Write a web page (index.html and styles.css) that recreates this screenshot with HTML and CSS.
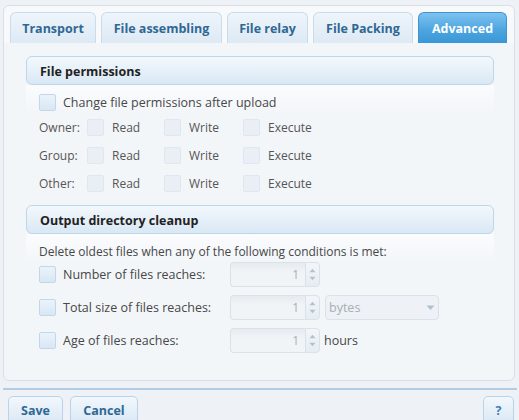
FILE: index.html
```html
<!DOCTYPE html>
<html>
<head>
<meta charset="utf-8">
<link rel="stylesheet" href="styles.css">
</head>
<body>
<div class="dialog">
  <div class="tabs">
    <div class="tab t1">Transport</div>
    <div class="tab t2">File assembling</div>
    <div class="tab t3">File relay</div>
    <div class="tab t4">File Packing</div>
    <div class="tab t5 active">Advanced</div>
  </div>
  <div class="panel">
    <div class="section">
      <div class="sec-head">File permissions</div>
      <div class="sec-body">
        <div class="row first"><span class="cb"></span><span class="lbl">Change file permissions after upload</span></div>
        <div class="row perm"><span class="who">Owner:</span><span class="cb dis"></span><span class="p">Read</span><span class="cb dis"></span><span class="p">Write</span><span class="cb dis"></span><span class="p">Execute</span></div>
        <div class="row perm"><span class="who">Group:</span><span class="cb dis"></span><span class="p">Read</span><span class="cb dis"></span><span class="p">Write</span><span class="cb dis"></span><span class="p">Execute</span></div>
        <div class="row perm"><span class="who">Other:</span><span class="cb dis"></span><span class="p">Read</span><span class="cb dis"></span><span class="p">Write</span><span class="cb dis"></span><span class="p">Execute</span></div>
      </div>
    </div>
    <div class="section second">
      <div class="sec-head">Output directory cleanup</div>
      <div class="sec-body">
        <div class="row note">Delete oldest files when any of the following conditions is met:</div>
        <div class="row cond"><span class="cb"></span><span class="clbl">Number of files reaches:</span><span class="spin"><span class="val">1</span><span class="arrows"><svg width="15" height="23" viewBox="0 0 15 23"><path d="M4 9 L7.5 5 L11 9 Z" fill="#b3c1ce"/><path d="M4 14 L7.5 18 L11 14 Z" fill="#b3c1ce"/></svg></span></span></div>
        <div class="row cond"><span class="cb"></span><span class="clbl">Total size of files reaches:</span><span class="spin"><span class="val">1</span><span class="arrows"><svg width="15" height="23" viewBox="0 0 15 23"><path d="M4 9 L7.5 5 L11 9 Z" fill="#b3c1ce"/><path d="M4 14 L7.5 18 L11 14 Z" fill="#b3c1ce"/></svg></span></span><span class="select"><span class="sval">bytes</span><span class="sarrow"><svg width="9" height="6" viewBox="0 0 9 6"><path d="M0.5 0.5 L8.5 0.5 L4.5 5 Z" fill="#b3c1ce"/></svg></span></span></div>
        <div class="row cond"><span class="cb"></span><span class="clbl">Age of files reaches:</span><span class="spin"><span class="val">1</span><span class="arrows"><svg width="15" height="23" viewBox="0 0 15 23"><path d="M4 9 L7.5 5 L11 9 Z" fill="#b3c1ce"/><path d="M4 14 L7.5 18 L11 14 Z" fill="#b3c1ce"/></svg></span></span><span class="unit">hours</span></div>
      </div>
    </div>
  </div>
</div>
<div class="sep"></div>
<div class="footer">
  <button class="btn save">Save</button>
  <button class="btn cancel">Cancel</button>
  <span class="spacer"></span>
  <button class="btn help">?</button>
</div>
</body>
</html>
```

FILE: styles.css
```css
html, body {
  margin: 0;
  padding: 0;
}
body {
  background: #eef2f6;
  font-family: "Open Sans", "Noto Sans", sans-serif;
  font-size: 12px;
  color: #474747;
  width: 519px;
  height: 420px;
  overflow: hidden;
}
.dialog {
  margin: 5px 4px 0 3px;
  border: 1px solid #d7dfe7;
  border-radius: 6px;
  background: #f3f6f9;
}
.tabs {
  display: flex;
  gap: 5px;
  padding: 6px 0 0 6px;
  background: #f7f9fb;
  border-radius: 6px 6px 0 0;
}
.tab {
  height: 31px;
  box-sizing: border-box;
  border: 1px solid #c9dcec;
  border-bottom: none;
  border-radius: 6px 6px 0 0;
  background: linear-gradient(#eef5fb, #dde9f4);
  color: #2f6894;
  font-weight: 700;
  font-size: 12.5px;
  display: flex;
  align-items: center;
  justify-content: center;
  padding-top: 1px;
}
.t1 { width: 86px; }
.t2 { width: 121px; }
.t3 { width: 81px; }
.t4 { width: 100px; }
.t5 { width: 89px; }
.tab.active {
  background: linear-gradient(#7dc2ef, #4ea6e0 55%, #3a96d6);
  border-color: #3f93cf;
  color: #fff;
}
.panel {
  padding: 13px 20px 27px 22px;
  background: #f3f6f9;
  border-radius: 0 0 6px 6px;
}
.sec-head {
  height: 29px;
  box-sizing: border-box;
  border: 1px solid #bcd6ea;
  border-radius: 6px;
  background: linear-gradient(#f3f8fc, #d9e8f5);
  padding: 2px 0 0 13px;
  display: flex;
  align-items: center;
  font-weight: 700;
  font-size: 12.5px;
  color: #222;
}
.sec-body {
  padding-left: 13px;
  background: linear-gradient(#fafcfe, #f3f6f9 28px);
}
.row {
  display: flex;
  align-items: center;
}
.row.first {
  height: 28px;
  box-sizing: border-box;
  padding-top: 6px;
}
.row.perm {
  height: 28px;
}
.section.second {
  margin-top: 8px;
}
.row.note {
  height: 28px;
  box-sizing: border-box;
  padding-top: 7px;
}
.row.cond {
  height: 25px;
  margin-bottom: 8px;
}
.row.cond:last-child {
  margin-bottom: 0;
}
.cb {
  width: 17px;
  height: 17px;
  box-sizing: border-box;
  border: 1px solid #c3d7e9;
  border-radius: 2px;
  background: linear-gradient(#eaf3fb, #d8e7f4);
  flex: none;
}
.cb.dis {
  border-color: #dfe7ef;
  background: #e9eff5;
}
.lbl {
  margin-left: 7px;
  font-size: 12.5px;
}
.who {
  width: 48px;
  color: #555;
}
.p {
  margin-left: 8px;
  color: #555;
}
.perm span:nth-child(3) { width: 52px; }
.perm span:nth-child(5) { width: 54px; }
.clbl {
  margin-left: 7px;
  width: 167px;
  font-size: 12.5px;
}
.spin {
  display: flex;
  height: 25px;
  flex: none;
}
.val {
  width: 75px;
  box-sizing: border-box;
  border: 1px solid #d9e1e9;
  border-right: none;
  border-radius: 4px 0 0 4px;
  background: linear-gradient(#e6ebf0, #f1f4f7 40%);
  color: #a7afb7;
  padding-right: 6px;
  display: flex;
  align-items: center;
  justify-content: flex-end;
}
.arrows {
  width: 15px;
  box-sizing: border-box;
  border: 1px solid #d9e1e9;
  border-radius: 0 4px 4px 0;
  background: linear-gradient(#f3f6f9, #e6ecf2);
  display: flex;
}
.select {
  margin-left: 5px;
  width: 114px;
  height: 25px;
  box-sizing: border-box;
  border: 1px solid #d9e1e9;
  border-radius: 4px;
  background: #eef2f6;
  display: flex;
  align-items: center;
}
.sval {
  flex: 1;
  padding-left: 3px;
  color: #a7afb7;
  font-size: 12.5px;
}
.sarrow {
  width: 16px;
  display: flex;
  justify-content: center;
}
.unit {
  margin-left: 4px;
  font-size: 12.5px;
}
.sep {
  margin: 7px 2px 0 3px;
  height: 2px;
  background: #b1cde5;
}
.footer {
  display: flex;
  gap: 7px;
  padding: 6px 5px 0 8px;
}
.spacer { flex: 1; }
.btn {
  height: 30px;
  border: 1px solid #bcd3e7;
  border-radius: 5px;
  background: linear-gradient(#f2f7fc, #d8e7f4);
  color: #2f6894;
  font-family: "Open Sans", "Noto Sans", sans-serif;
  font-weight: 700;
  font-size: 12.5px;
  padding: 0 0 2px;
}
.save { width: 55px; }
.cancel { width: 68px; }
.help { width: 31px; color: #3f7fb5; }
```
